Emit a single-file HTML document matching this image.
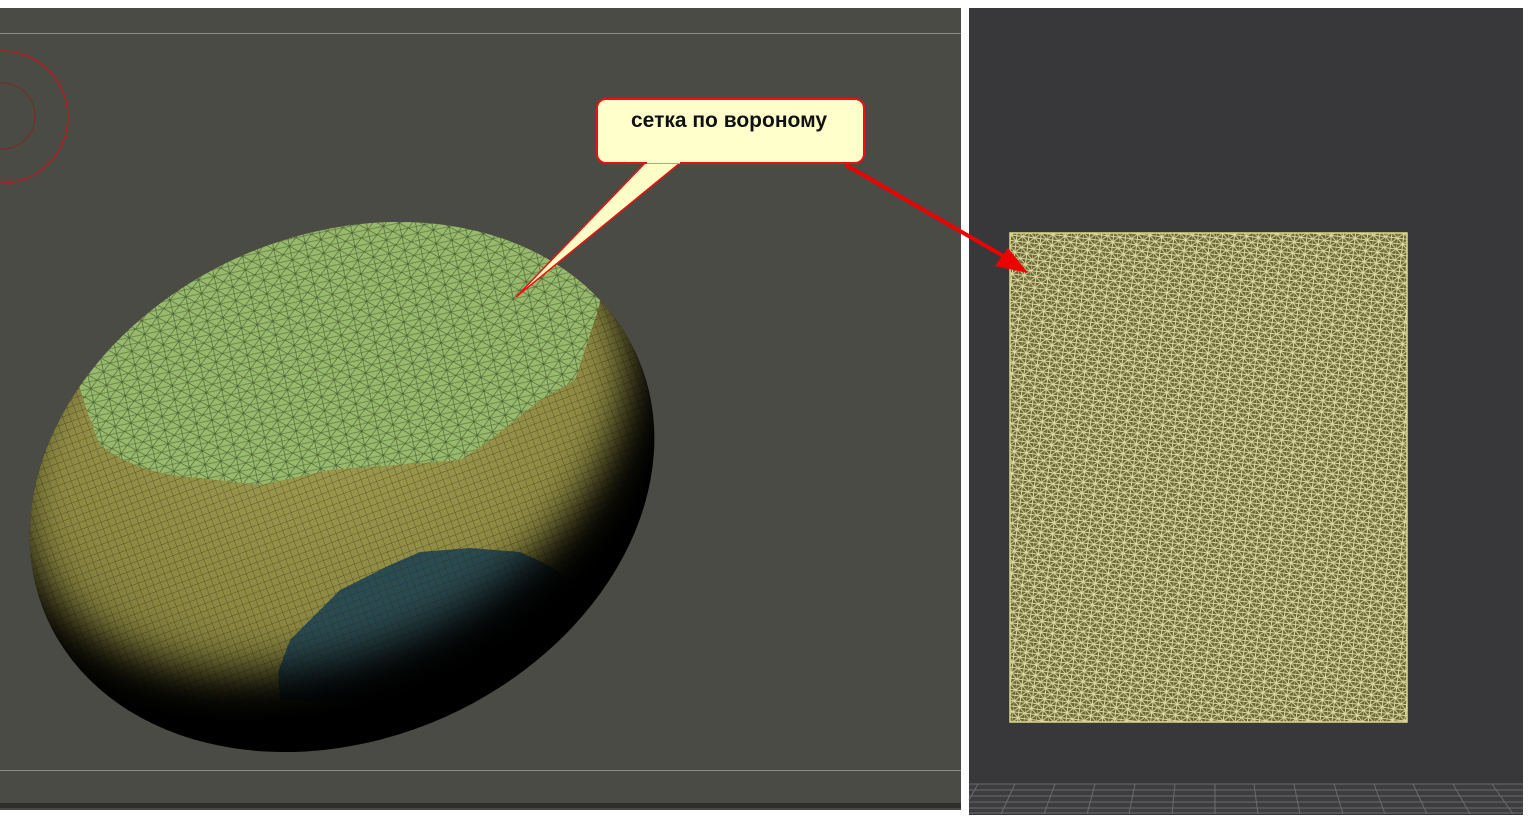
<!DOCTYPE html>
<html><head><meta charset="utf-8"><style>
html,body{margin:0;padding:0;background:#fff;width:1531px;height:825px;overflow:hidden}
svg{display:block}
</style></head><body>
<svg width="1531" height="825" viewBox="0 0 1531 825" xmlns="http://www.w3.org/2000/svg">
<defs>
  <pattern id="quad" width="7" height="7" patternUnits="userSpaceOnUse" patternTransform="rotate(-20)">
    <path d="M0 0H7M0 0V7" stroke="#2a2a10" stroke-width="0.7" opacity="0.7" fill="none"/>
  </pattern>
  <pattern id="tri" width="16" height="14" patternUnits="userSpaceOnUse" patternTransform="rotate(-12)">
    <path d="M0 0H16M0 7H16M0 14H16M0 0L8 7L16 0M0 14L8 7L16 14M8 0V14" stroke="#2c3a1c" stroke-width="0.6" opacity="0.75" fill="none"/>
  </pattern>
  <pattern id="tri2" width="12" height="11" patternUnits="userSpaceOnUse" patternTransform="rotate(7)">
    <path d="M0 0H12M0 5.5H12M0 11H12M0 0L6 5.5L12 0M0 11L6 5.5L12 11M6 0V11M0 0V11" stroke="#dcd8a2" stroke-width="1" fill="none"/>
  </pattern>
  <radialGradient id="shade" cx="0.45" cy="0.3" r="0.7">
    <stop offset="0" stop-color="#a6a256"/>
    <stop offset="0.6" stop-color="#8e8942"/>
    <stop offset="1" stop-color="#6a6630"/>
  </radialGradient>
  <filter id="blur" x="-20%" y="-20%" width="140%" height="140%"><feGaussianBlur stdDeviation="22"/></filter>
  <clipPath id="egg"><ellipse cx="342" cy="487" rx="323" ry="252" transform="rotate(-24 342 487)"/></clipPath>
  <mask id="lit"><rect x="0" y="0" width="961" height="825" fill="#000"/><g filter="url(#blur)"><ellipse cx="322" cy="432" rx="320" ry="222" transform="rotate(-24 322 432)" fill="#fff"/></g></mask>
</defs>
<!-- left panel -->
<rect x="0" y="8" width="961" height="802" fill="#4a4b45"/>
<rect x="0" y="33" width="961" height="1" fill="#8d8d88"/>
<rect x="0" y="770" width="961" height="1" fill="#8d8d88"/>
<rect x="0" y="803" width="961" height="5" fill="#2e2e2e"/>
<circle cx="2" cy="117" r="66" fill="none" stroke="#c0161a" stroke-width="1.3"/>
<circle cx="2" cy="116" r="33" fill="none" stroke="#7a2a22" stroke-width="1"/>
<!-- egg -->
<g clip-path="url(#egg)">
  <rect x="0" y="180" width="700" height="600" fill="#000"/>
  <g mask="url(#lit)">
    <rect x="0" y="180" width="700" height="600" fill="url(#shade)"/>
    <path d="M280 700 L278 672 L290 640 L318 612 L340 590 L390 565 L420 552 L470 548 L520 552 L548 565 L570 580 L585 600 L540 660 L440 705 Z" fill="#2b4b52"/>
    <rect x="0" y="180" width="700" height="600" fill="url(#quad)"/>
  </g>
  <path d="M75 370 Q140 275 240 245 Q330 215 420 214 Q520 220 590 262 Q605 290 598 310 L575 380 L540 400 L490 440 L460 460 L330 470 L260 485 L200 478 Q140 475 100 445 Q85 410 75 370 Z" fill="#97ba6c"/>
  <path d="M75 370 Q140 275 240 245 Q330 215 420 214 Q520 220 590 262 Q605 290 598 310 L575 380 L540 400 L490 440 L460 460 L330 470 L260 485 L200 478 Q140 475 100 445 Q85 410 75 370 Z" fill="url(#tri)"/>
</g>
<!-- right panel -->
<rect x="969" y="8" width="554" height="807" fill="#38383a"/>
<rect x="969" y="784" width="554" height="30" fill="#3d3d3f"/>
<g stroke="#6a6a6c" stroke-width="1">
  <path d="M969 784H1523M969 790H1523M969 796H1523M969 802H1523M969 808H1523M969 813H1523"/>
  <path d="M978 784L969 800M1015 784L1001 814M1055 784L1044 814M1095 784L1087 814M1135 784L1129 814M1175 784L1172 814M1215 784L1215 814M1254 784L1258 814M1294 784L1300 814M1334 784L1343 814M1374 784L1385 814M1413 784L1427 814M1453 784L1470 814M1492 784L1513 814"/>
</g>
<rect x="1010" y="233" width="397" height="489" fill="#6b6834"/>
<rect x="1010" y="233" width="397" height="489" fill="url(#tri2)"/>
<rect x="1010" y="233" width="397" height="489" fill="none" stroke="#dcdc80" stroke-width="1.5"/>
<!-- callout -->
<path d="M645 163 L516 297 L680 163 Z" fill="#ffffc8" stroke="#ee1010" stroke-width="1.5"/>
<rect x="597" y="99" width="267" height="64" rx="9" fill="#ffffcc" stroke="#ee1010" stroke-width="2"/>
<path d="M647 162 L680 162" stroke="#ffffcc" stroke-width="3"/>
<text x="729" y="127" text-anchor="middle" font-family="Liberation Sans, sans-serif" font-weight="bold" font-size="21" fill="#111">сетка по вороному</text>
<!-- arrow -->
<line x1="846" y1="165" x2="1005" y2="257" stroke="#ee0000" stroke-width="4"/>
<path d="M1028 273 L995 266 L1008 248 Z" fill="#ee0000"/>
</svg>
</body></html>
